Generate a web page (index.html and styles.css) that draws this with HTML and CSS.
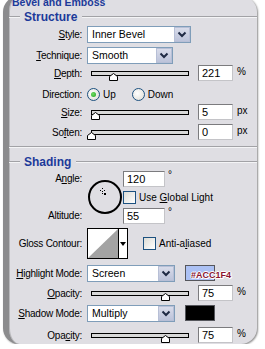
FILE: index.html
```html
<!DOCTYPE html>
<html lang="en">

<head>
  <meta charset="UTF-8">
  <meta name="viewport" content="width=device-width, initial-scale=1.0">
  <title>Bevel and Emboss</title>
  <link rel="stylesheet" href="styles.css">
</head>

<body>
  <div class="panel">
    <div class="title">Bevel and Emboss</div>

    <div class="legend legend-structure"><span>Structure</span></div>

    <div class="row row-style">
      <label class="lbl"><u>S</u>tyle:</label>
      <div class="select w-style"><span class="value">Inner Bevel</span><span class="drop"><svg width="10" height="7" viewBox="0 0 10 7"><path d="M1.5 1.5 L5 5 L8.5 1.5" fill="none" stroke="#1f2a44" stroke-width="2"/></svg></span></div>
    </div>

    <div class="row row-tech">
      <label class="lbl"><u>T</u>echnique:</label>
      <div class="select w-tech"><span class="value">Smooth</span><span class="drop"><svg width="10" height="7" viewBox="0 0 10 7"><path d="M1.5 1.5 L5 5 L8.5 1.5" fill="none" stroke="#1f2a44" stroke-width="2"/></svg></span></div>
    </div>

    <div class="row row-depth">
      <label class="lbl"><u>D</u>epth:</label>
      <div class="slider"><div class="track"></div><svg class="thumb" style="--pos: 22%" width="9" height="8" viewBox="0 0 9 8"><path d="M0.5 7.5 V3.5 L4.5 0.5 L8.5 3.5 V7.5 Z" fill="#fff" stroke="#000"/></svg></div>
      <div class="field">221</div>
      <span class="unit">%</span>
    </div>

    <div class="row row-dir">
      <label class="lbl">Direction:</label>
      <span class="radio on"></span><span class="opt">Up</span>
      <span class="radio down"></span><span class="opt">Down</span>
    </div>

    <div class="row row-size">
      <label class="lbl"><u>S</u>ize:</label>
      <div class="slider"><div class="track"></div><svg class="thumb" style="--pos: 4%" width="9" height="8" viewBox="0 0 9 8"><path d="M0.5 7.5 V3.5 L4.5 0.5 L8.5 3.5 V7.5 Z" fill="#fff" stroke="#000"/></svg></div>
      <div class="field">5</div>
      <span class="unit">px</span>
    </div>

    <div class="row row-soften">
      <label class="lbl">So<u>f</u>ten:</label>
      <div class="slider"><div class="track"></div><svg class="thumb" style="--pos: 0%" width="9" height="8" viewBox="0 0 9 8"><path d="M0.5 7.5 V3.5 L4.5 0.5 L8.5 3.5 V7.5 Z" fill="#fff" stroke="#000"/></svg></div>
      <div class="field">0</div>
      <span class="unit">px</span>
    </div>

    <div class="separator"></div>

    <div class="legend legend-shading"><span>Shading</span></div>

    <div class="angles">
      <label class="lbl lbl-angle">A<u>n</u>gle:</label>
      <div class="dial">
        <svg width="36" height="36" viewBox="0 0 36 36">
          <circle cx="18" cy="18" r="16" fill="none" stroke="#000" stroke-width="2"/>
          <path d="M15.5 9 v1 M15.5 12 v1 M15.5 14 v1 M13 11.5 h1 M17 11.5 h1" stroke="#000" stroke-width="1"/>
          <rect x="17" y="14" width="2" height="2" fill="#000"/>
        </svg>
      </div>
      <div class="inline angle-in"><div class="field small">120</div><span class="deg">°</span></div>
      <div class="inline global"><span class="check"></span><span class="opt">Use <u>G</u>lobal Light</span></div>
      <label class="lbl lbl-alt">Altitude:</label>
      <div class="inline alt-in"><div class="field small">55</div><span class="deg">°</span></div>
    </div>

    <div class="row row-gloss">
      <label class="lbl">Gloss Contour:</label>
      <div class="contour">
        <svg class="curve" width="30" height="29" viewBox="0 0 30 29"><rect width="30" height="29" fill="#fff"/><path d="M0 29 L30 0 V29 Z" fill="#a3a3a3"/></svg>
        <span class="contour-drop"><svg width="6" height="4" viewBox="0 0 6 4"><path d="M0 0 H6 L3 4 Z" fill="#000"/></svg></span>
      </div>
      <span class="check aa"></span><span class="opt">Anti-a<u>l</u>iased</span>
    </div>

    <div class="row row-high">
      <label class="lbl"><u>H</u>ighlight Mode:</label>
      <div class="select w-mode"><span class="value">Screen</span><span class="drop"><svg width="10" height="7" viewBox="0 0 10 7"><path d="M1.5 1.5 L5 5 L8.5 1.5" fill="none" stroke="#1f2a44" stroke-width="2"/></svg></span></div>
      <div class="swatch light"><span class="hex">#ACC1F4</span></div>
    </div>

    <div class="row row-op1">
      <label class="lbl"><u>O</u>pacity:</label>
      <div class="slider"><div class="track"></div><svg class="thumb" style="--pos: 76%" width="9" height="8" viewBox="0 0 9 8"><path d="M0.5 7.5 V3.5 L4.5 0.5 L8.5 3.5 V7.5 Z" fill="#fff" stroke="#000"/></svg></div>
      <div class="field">75</div>
      <span class="unit">%</span>
    </div>

    <div class="row row-shadow">
      <label class="lbl"><u>S</u>hadow Mode:</label>
      <div class="select w-mode"><span class="value">Multiply</span><span class="drop"><svg width="10" height="7" viewBox="0 0 10 7"><path d="M1.5 1.5 L5 5 L8.5 1.5" fill="none" stroke="#1f2a44" stroke-width="2"/></svg></span></div>
      <div class="swatch dark"></div>
    </div>

    <div class="row row-op2">
      <label class="lbl">Opa<u>c</u>ity:</label>
      <div class="slider"><div class="track"></div><svg class="thumb" style="--pos: 76%" width="9" height="8" viewBox="0 0 9 8"><path d="M0.5 7.5 V3.5 L4.5 0.5 L8.5 3.5 V7.5 Z" fill="#fff" stroke="#000"/></svg></div>
      <div class="field">75</div>
      <span class="unit">%</span>
    </div>
  </div>
</body>

</html>
```

FILE: styles.css
```css
body {
  margin: 0;
  background: #fff;
  overflow: hidden;
  font-family: "Liberation Sans", Arial, sans-serif;
  font-size: 10px;
  color: #000;
}

.panel {
  position: relative;
  box-sizing: border-box;
  width: 254px;
  height: 348px;
  margin: -4px 0 0 3px;
  background: #dfdee3;
  border-left: 6px solid #8c8c8e;
  border-radius: 16px;
  box-shadow: 1px 1px 2px rgba(0, 0, 0, 0.45), inset 1px 0 0 #b9b9bc;
}

.title {
  margin-left: 3px;
  font-weight: bold;
  font-size: 10.5px;
  line-height: 12px;
  color: #1c3a9a;
}

/* group headings */
.legend {
  display: flex;
  align-items: center;
  height: 13px;
  font-size: 12px;
  font-weight: bold;
  color: #1c3a9a;
}

.legend::before,
.legend::after {
  content: "";
  height: 0;
  border-top: 1px solid #a2a2a6;
  box-shadow: 0 1px 0 #f4f4f6;
}

.legend::before {
  width: 11px;
}

.legend::after {
  flex: 1;
}

.legend span {
  padding: 0 5px 0 4px;
}

.legend-structure {
  margin-top: 2px;
}

.legend-shading {
  margin-top: 8px;
}

.separator {
  margin-top: 5px;
  border-top: 1px solid #a2a2a6;
  box-shadow: 0 1px 0 #f4f4f6;
}

/* rows */
.row {
  display: flex;
  align-items: center;
  height: 18px;
  white-space: nowrap;
}

.lbl {
  flex: none;
  width: 73px;
  margin-right: 5px;
  text-align: right;
  white-space: nowrap;
  letter-spacing: -0.25px;
}

.row-style { margin-top: 2px; }
.row-tech { margin-top: 3px; }
.row-dir { margin-top: 3px; }
.row-soften { margin-top: 2px; }
.row-gloss { height: 31px; margin-top: 4px; }
.row-high { margin-top: 5px; }
.row-op1 { margin-top: 2px; }
.row-shadow { margin-top: 2px; }
.row-op2 { margin-top: 4px; }

/* select boxes */
.select {
  box-sizing: border-box;
  display: flex;
  align-items: center;
  height: 17px;
  border: 1px solid #7f9db9;
  background: #fff;
  font-size: 10.5px;
}

.select .value {
  flex: 1;
  padding-left: 4px;
}

.drop {
  display: flex;
  align-items: center;
  justify-content: center;
  box-sizing: border-box;
  width: 16px;
  height: 15px;
  border: 1px solid #b7bfd6;
  background: linear-gradient(#d9dcea, #bcc3da);
}

.w-style { width: 104px; }
.w-tech { width: 86px; }
.w-mode { width: 88px; }

/* sliders */
.slider {
  position: relative;
  flex: none;
  width: 98px;
  height: 18px;
  margin: 0 9px 0 4px;
}

.track {
  box-sizing: border-box;
  margin-top: 7px;
  height: 5px;
  border: 1px solid #000;
  background: #d8d8d8;
}

.thumb {
  position: absolute;
  top: 9px;
  left: calc(var(--pos) - 4px);
}

.field {
  box-sizing: border-box;
  width: 35px;
  height: 16px;
  padding: 1px 0 0 3px;
  border: 1px solid;
  border-color: #7b7b7e #c4c4c8 #c4c4c8 #7b7b7e;
  background: #fff;
  font-size: 11px;
  line-height: 13px;
}

.field.small {
  width: 42px;
}

.unit {
  margin: -4px 0 0 4px;
}

/* radios and checkboxes */
.radio {
  box-sizing: border-box;
  flex: none;
  width: 13px;
  height: 13px;
  border: 1px solid #1c5180;
  border-radius: 50%;
  background: radial-gradient(circle at 40% 40%, #fff, #dcdad2);
  position: relative;
}

.radio.on::after {
  content: "";
  position: absolute;
  left: 3px;
  top: 3px;
  width: 5px;
  height: 5px;
  border-radius: 50%;
  background: radial-gradient(circle at 40% 40%, #6fdc62, #21a121);
}

.radio.down {
  margin-left: 16px;
}

.opt {
  margin-left: 3px;
}

.check {
  box-sizing: border-box;
  flex: none;
  width: 13px;
  height: 13px;
  border: 1px solid #1c5180;
  background: linear-gradient(135deg, #dcdcd6, #fff);
}

.check.aa {
  margin-left: 15px;
}

/* angle block */
.angles {
  display: grid;
  grid-template-columns: 73px 41px 1fr;
  grid-template-rows: 17px 18px 17px;
  row-gap: 1px;
  margin-top: 2px;
  white-space: nowrap;
}

.angles .lbl {
  margin-right: 0;
  line-height: 17px;
}

.lbl-angle { grid-area: 1 / 1; }
.lbl-alt { grid-area: 3 / 1; }

.dial {
  grid-area: 1 / 2 / 4 / 3;
  margin: 9px 0 0 5px;
}

.dial svg {
  display: block;
}

.inline {
  display: flex;
  align-items: center;
}

.angle-in { grid-area: 1 / 3; }
.global { grid-area: 2 / 3; }
.alt-in { grid-area: 3 / 3; }

.deg {
  align-self: flex-start;
  margin-left: 3px;
  line-height: 10px;
}

/* gloss contour */
.contour {
  display: flex;
  box-sizing: border-box;
  width: 41px;
  height: 31px;
  border: 1px solid #000;
  background: #fff;
}

.curve {
  display: block;
}

.contour-drop {
  display: flex;
  align-items: center;
  justify-content: center;
  flex: 1;
  border-left: 1px solid #000;
}

/* colour swatches */
.swatch {
  position: relative;
  box-sizing: border-box;
  width: 30px;
  height: 16px;
  margin-left: 10px;
  border: 1px solid #55565c;
}

.swatch.light {
  background: #acc1f4;
}

.swatch.dark {
  background: #000;
}

.hex {
  position: absolute;
  left: 5px;
  top: 5px;
  font-size: 9px;
  font-weight: bold;
  line-height: 9px;
  color: #8a1430;
  text-shadow: 1px 0 #fff, -1px 0 #fff, 0 1px #fff, 0 -1px #fff, 1px 1px #fff;
  white-space: nowrap;
}
```
